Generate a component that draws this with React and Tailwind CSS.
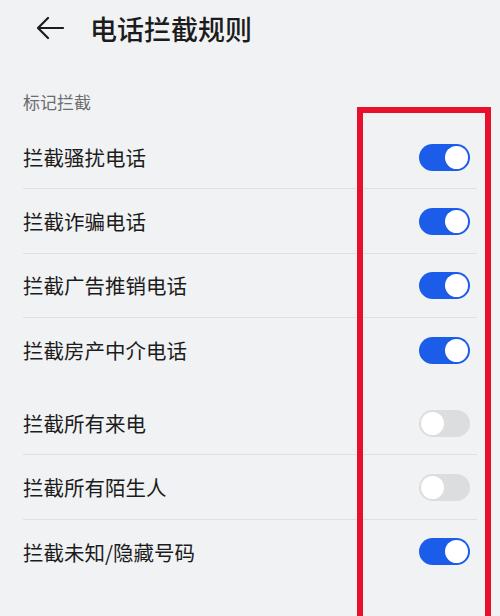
import React from 'react';

const font = { fontFamily: '"Noto Sans CJK SC", "Noto Sans", sans-serif' };

const Toggle = ({ on }) =>
  on ? (
    <div className="w-[51px] h-[27px] rounded-full bg-[#1b5ce8] flex items-center justify-end pr-[2px]">
      <div className="w-[23px] h-[23px] rounded-full bg-white" />
    </div>
  ) : (
    <div className="w-[51px] h-[27px] rounded-full bg-[#dcdddf] flex items-center justify-start pl-[2px]">
      <div className="w-[23px] h-[23px] rounded-full bg-white" />
    </div>
  );

const Row = ({ label, on, divider }) => (
  <div className="relative h-[64.3px] flex items-center justify-between pl-[23px] pr-[30px]">
    <span className="text-[20.5px] text-[#1c1c1c] leading-none">{label}</span>
    {on !== undefined && <Toggle on={on} />}
    {divider && <div className="absolute bottom-0 left-[23px] right-[23px] h-px bg-[#dfe0e2]" />}
  </div>
);

const groups = [
  [
    { label: '拦截骚扰电话', on: true },
    { label: '拦截诈骗电话', on: true },
    { label: '拦截广告推销电话', on: true },
    { label: '拦截房产中介电话', on: true },
  ],
  [
    { label: '拦截所有来电', on: false },
    { label: '拦截所有陌生人', on: false },
    { label: '拦截未知/隐藏号码', on: true },
  ],
  [{ label: '拦截响铃一声的来电' }],
];

export default function App() {
  return (
    <div className="relative w-[500px] h-[616px] overflow-hidden bg-[#f1f2f4]" style={font}>
      {/* 头部 */}
      <div className="h-[60px] flex items-center pl-[36px] pb-[4px]">
        <svg width="28" height="24" viewBox="0 0 28 24" fill="none" stroke="#1c1c1c" strokeWidth="2.2" strokeLinecap="round" strokeLinejoin="round">
          <path d="M27 12H2M12 2 2 12l10 10" />
        </svg>
        <h1 className="ml-[26px] text-[27px] font-medium text-[#1c1c1c] leading-none">电话拦截规则</h1>
      </div>

      {/* 分组标题 */}
      <div className="h-[65px] flex items-center pl-[23px] pt-[17px]">
        <span className="text-[17px] text-[#6b6c6e] leading-none">标记拦截</span>
      </div>

      {groups.map((g, gi) => (
        <div key={gi} className={gi > 0 ? 'mt-[9px]' : ''}>
          {g.map((r, i) => (
            <Row key={r.label} label={r.label} on={r.on} divider={i < g.length - 1} />
          ))}
        </div>
      ))}

      {/* 红框标注 */}
      <div className="absolute left-[357px] top-[107px] w-[134px] h-[600px] border-[6px] border-[#e8102b]" />
    </div>
  );
}
